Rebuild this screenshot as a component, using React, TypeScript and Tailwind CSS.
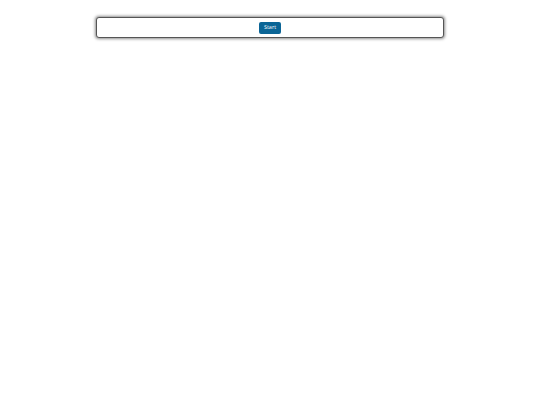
export default function App() {
  return (
    <div className="min-h-[405px] bg-white pt-[17px]" style={{ fontFamily: '"Open Sans", "Liberation Sans", sans-serif' }}>
      <div className="mx-auto flex h-[21px] w-[348px] items-center justify-center rounded-[3px] border border-[#555] bg-white shadow-[0_0_3px_1px_rgba(0,0,0,0.45)]">
        <button className="flex h-[12px] w-[22px] items-center justify-center rounded-[2px] bg-[#0b6596] text-[5.5px] leading-none text-white">
          Start
        </button>
      </div>
    </div>
  );
}
